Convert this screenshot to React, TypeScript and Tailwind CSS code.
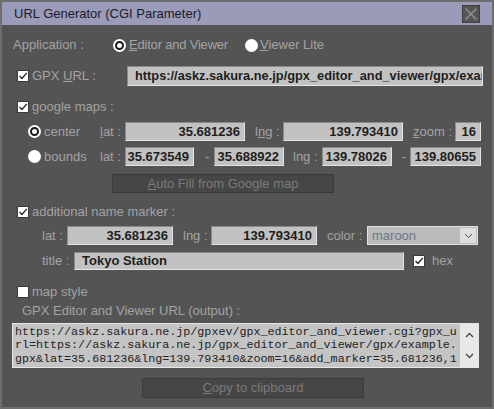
import React from "react";

const LABEL = "text-[#a3a3a3]";
const FONT = { fontFamily: '"Liberation Sans", Arial, sans-serif' };

function Check({ checked }: { checked: boolean }) {
  return (
    <span className="flex h-[12px] w-[12px] shrink-0 items-center justify-center border border-[#3a3a3a] bg-white">
      {checked && (
        <svg width="10" height="10" viewBox="0 0 10 10">
          <polyline points="1.5,5 4,7.5 8.8,1.8" fill="none" stroke="#222" strokeWidth="1.3" />
        </svg>
      )}
    </span>
  );
}

function Radio({ checked }: { checked: boolean }) {
  return (
    <span className="flex h-[13px] w-[13px] shrink-0 items-center justify-center rounded-full bg-white">
      {checked && <span className="h-[9px] w-[9px] rounded-full border-[2px] border-[#1a1a1a] bg-white" />}
    </span>
  );
}

function Field({ value, w }: { value: string; w: string }) {
  return (
    <div
      className={`${w} flex h-full items-center justify-end overflow-hidden whitespace-nowrap border border-t-[#8a8a8a] border-l-[#8a8a8a] border-b-[#e4e4e4] border-r-[#e4e4e4] bg-[#c2c2c2] px-[4px] text-[13px] font-bold text-[#1e1e1e]`}
    >
      {value}
    </div>
  );
}

export default function App() {
  return (
    <div className="h-[409px] w-[494px] border-2 border-[#6e6e6e] bg-[#545454]" style={FONT}>
      {/* title bar */}
      <div className="flex h-[23px] items-center justify-between bg-[#9a9ab9] pl-[12px] pr-[12px]">
        <span className="text-[13px] text-[#1a1a28]">URL Generator (CGI Parameter)</span>
        <span className="flex h-[18px] w-[18px] items-center justify-center border border-[#3e3e3e] bg-[#555]">
          <svg width="14" height="14" viewBox="0 0 14 14">
            <path d="M1.5 1.5 L12.5 12.5 M12.5 1.5 L1.5 12.5" stroke="#8c8c8c" strokeWidth="1.6" />
          </svg>
        </span>
      </div>

      <div className="flex flex-col text-[13px]">
        {/* application */}
        <div className="mt-[11px] flex h-[18px] items-center pl-[11px]">
          <span className={`w-[100px] ${LABEL}`}>Application :</span>
          <Radio checked />
          <span className={`ml-[3px] w-[116px] tracking-[-0.2px] ${LABEL}`}>
            <span className="underline">E</span>ditor and Viewer
          </span>
          <Radio checked={false} />
          <span className={`ml-[2px] ${LABEL}`}>
            <span className="underline">V</span>iewer Lite
          </span>
        </div>

        {/* gpx url */}
        <div className="mt-[12px] flex h-[20px] items-center pl-[15px]">
          <div className="flex w-[110px] items-center">
            <Check checked />
            <span className={`ml-[3px] ${LABEL}`}>
              GPX <span className="underline">U</span>RL :
            </span>
          </div>
          <div className="flex h-full w-[356px] items-center overflow-hidden whitespace-nowrap border border-t-[#8a8a8a] border-l-[#8a8a8a] border-b-[#e4e4e4] border-r-[#e4e4e4] bg-[#c2c2c2] pl-[7px] text-[12.8px] font-bold text-[#1e1e1e]">
            https://askz.sakura.ne.jp/gpx_editor_and_viewer/gpx/example.gpx
          </div>
        </div>

        {/* google maps */}
        <div className="mt-[13px] flex h-[16px] items-center pl-[15px]">
          <Check checked />
          <span className={`ml-[3px] ${LABEL}`}>google maps :</span>
        </div>

        {/* center */}
        <div className="mt-[7px] flex h-[19px] items-center pl-[26px]">
          <Radio checked />
          <span className={`ml-[3px] w-[56px] ${LABEL}`}>center</span>
          <span className={`w-[25px] ${LABEL}`}>
            <span className="underline">l</span>at :
          </span>
          <Field value="35.681236" w="w-[120px]" />
          <span className={`w-[38px] pl-[10px] ${LABEL}`}>
            l<span className="underline">n</span>g :
          </span>
          <Field value="139.793410" w="w-[120px]" />
          <span className={`w-[52px] pl-[10px] ${LABEL}`}>
            <span className="underline">z</span>oom :
          </span>
          <Field value="16" w="w-[26px]" />
        </div>

        {/* bounds */}
        <div className="mt-[6px] flex h-[19px] items-center pl-[26px]">
          <Radio checked={false} />
          <span className={`ml-[3px] w-[56px] ${LABEL}`}>bounds</span>
          <span className={`w-[25px] ${LABEL}`}>lat :</span>
          <Field value="35.673549" w="w-[69px]" />
          <span className={`w-[20px] pl-[11px] ${LABEL}`}>-</span>
          <Field value="35.688922" w="w-[70px]" />
          <span className={`w-[38px] pl-[9px] ${LABEL}`}>lng :</span>
          <Field value="139.78026" w="w-[70px]" />
          <span className={`w-[18px] pl-[10px] ${LABEL}`}>-</span>
          <Field value="139.80655" w="w-[71px]" />
        </div>

        {/* auto fill */}
        <div className="mt-[8px] flex h-[19px] pl-[110px]">
          <div className="flex w-[222px] items-center justify-center border border-[#3a3a3a] bg-[#464646] text-[#7a7a7a]">
            <span>
              <span className="underline">A</span>uto Fill from Google map
            </span>
          </div>
        </div>

        {/* additional name marker */}
        <div className="mt-[11px] flex h-[16px] items-center pl-[15px]">
          <Check checked />
          <span className={`ml-[3px] ${LABEL}`}>additional name marker :</span>
        </div>

        <div className="mt-[6px] flex h-[19px] items-center pl-[40px]">
          <span className={`w-[25px] ${LABEL}`}>lat :</span>
          <Field value="35.681236" w="w-[106px]" />
          <span className={`w-[38px] pl-[10px] ${LABEL}`}>lng :</span>
          <Field value="139.793410" w="w-[106px]" />
          <span className={`w-[50px] pl-[10px] ${LABEL}`}>color :</span>
          <div className="flex h-full w-[111px] items-center border border-[#e2e2e2] bg-[#bbbbbb]">
            <span className="flex-1 pl-[4px] text-[13px] text-[#6c7686]">maroon</span>
            <span className="mr-[1px] flex h-[15px] w-[16px] items-center justify-center bg-[#dedede]">
              <svg width="9" height="6" viewBox="0 0 9 6">
                <polyline points="1,1 4.5,4.5 8,1" fill="none" stroke="#555" strokeWidth="1" />
              </svg>
            </span>
          </div>
        </div>

        <div className="mt-[7px] flex h-[18px] items-center pl-[40px]">
          <span className={`w-[32px] ${LABEL}`}>title :</span>
          <div className="flex h-full w-[330px] items-center border border-t-[#8a8a8a] border-l-[#8a8a8a] border-b-[#e4e4e4] border-r-[#e4e4e4] bg-[#c2c2c2] pl-[7px] text-[13px] font-bold text-[#1e1e1e]">
            Tokyo Station
          </div>
          <span className="ml-[9px]">
            <Check checked />
          </span>
          <span className={`ml-[7px] ${LABEL}`}>hex</span>
        </div>

        {/* map style */}
        <div className="mt-[14px] flex h-[16px] items-center pl-[15px]">
          <Check checked={false} />
          <span className={`ml-[3px] ${LABEL}`}>map style</span>
        </div>

        <div className={`mt-[3px] flex h-[16px] items-center pl-[20px] ${LABEL}`}>
          GPX Editor and Viewer URL (output) :
        </div>

        {/* output */}
        <div className="mt-[4px] ml-[10px] flex h-[45px] w-[467px] border border-[#e6e6e6] bg-[#c4c4c4]">
          <div
            className="flex-1 overflow-hidden whitespace-pre pl-[2px] pt-[2px] text-[11.7px] leading-[13.3px] text-[#222]"
            style={{ fontFamily: '"Liberation Mono", "Courier New", monospace' }}
          >
            <div>https://askz.sakura.ne.jp/gpxev/gpx_editor_and_viewer.cgi?gpx_u</div>
            <div>rl=https://askz.sakura.ne.jp/gpx_editor_and_viewer/gpx/example.</div>
            <div>gpx&amp;lat=35.681236&amp;lng=139.793410&amp;zoom=16&amp;add_marker=35.681236,1</div>
          </div>
          <div className="flex w-[18px] flex-col items-center justify-between bg-[#e8e8e8] py-[8px]">
            <svg width="9" height="6" viewBox="0 0 9 6">
              <polyline points="1,5 4.5,1.5 8,5" fill="none" stroke="#444" strokeWidth="1.3" />
            </svg>
            <svg width="9" height="6" viewBox="0 0 9 6">
              <polyline points="1,1 4.5,4.5 8,1" fill="none" stroke="#444" strokeWidth="1.3" />
            </svg>
          </div>
        </div>

        {/* copy */}
        <div className="mt-[10px] flex h-[20px] pl-[140px]">
          <div className="flex w-[222px] items-center justify-center border border-[#3a3a3a] bg-[#464646] text-[#7a7a7a]">
            <span>
              <span className="underline">C</span>opy to clipboard
            </span>
          </div>
        </div>
      </div>
    </div>
  );
}
